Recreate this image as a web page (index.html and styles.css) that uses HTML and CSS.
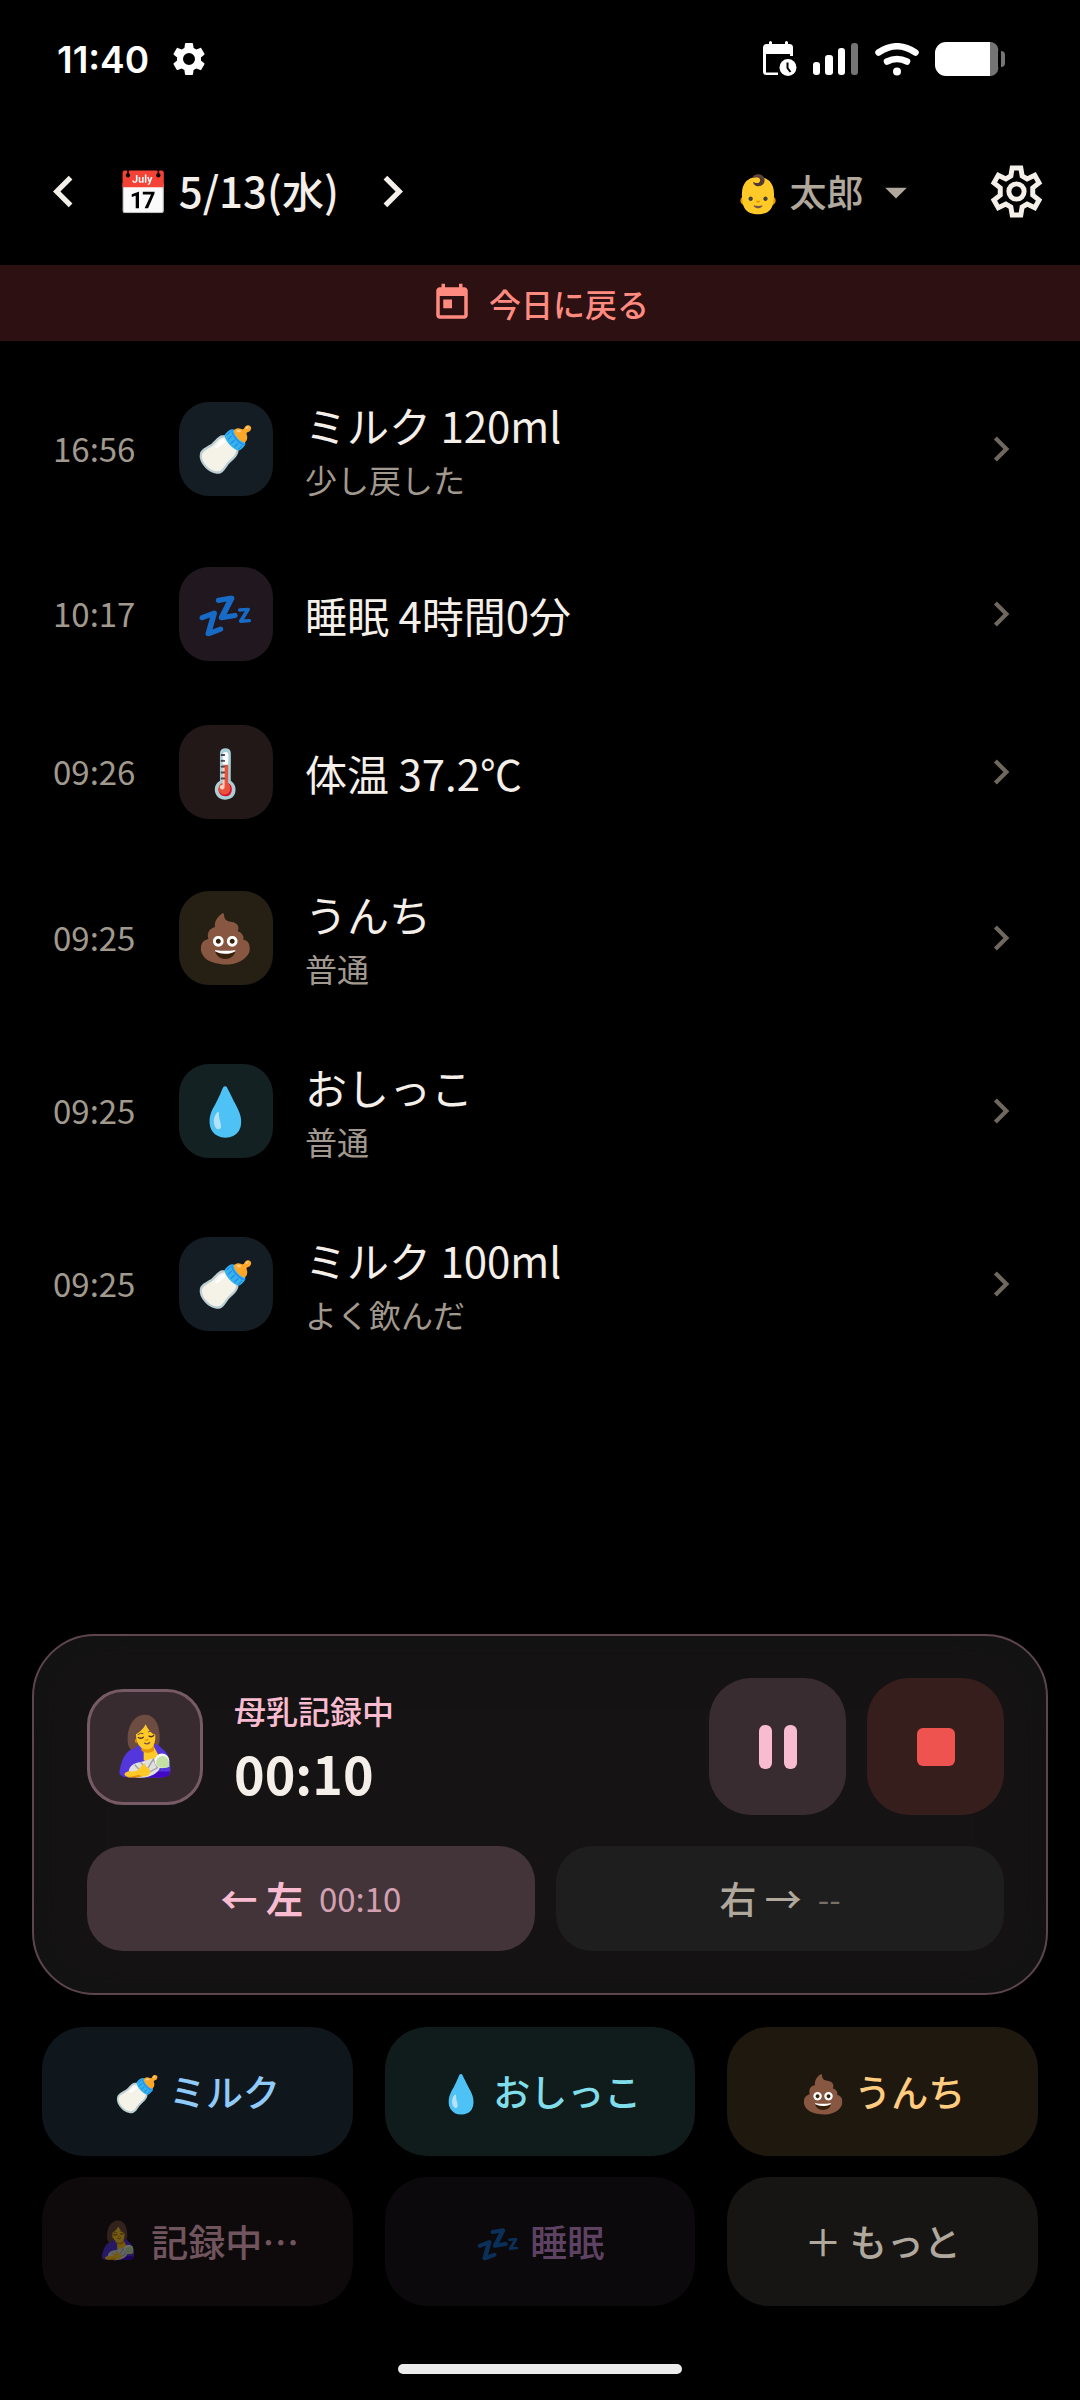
FILE: index.html
```html
<!DOCTYPE html>
<html lang="ja">
<head>
<meta charset="utf-8">
<meta name="viewport" content="width=device-width, initial-scale=1">
<title>育児記録</title>
<link rel="stylesheet" href="styles.css">
</head>
<body>

<svg class="defs" aria-hidden="true">
  <symbol id="nursing" viewBox="36 26 162 194">
    <path d="M117 28c-32 0-50 32-52 66-1 22 3 36 14 42h66c12-8 18-24 16-48-2-36-18-60-44-60z" fill="#6d4c41"/>
    <path d="M88 128c4-8 12-12 24-12h34c10 0 16 6 22 14 16 10 27 30 25 68-2 14-14 18-34 18H70c-24 0-34-8-28-26 6-32 20-58 46-62z" fill="#5436dd"/>
    <path d="M130 198h62c-1 14-12 18-32 18h-30z" fill="#4208c4"/>
    <path d="M113 126h32l14 26-20 22-26-10z" fill="#ffc928"/>
    <path d="M106 118h38v18c-10 8-28 8-38-2z" fill="#e59600"/>
    <path d="M92 100c-6 0-7 10 0 14z" fill="#e59600"/>
    <path d="M119 56c-6 12-16 22-29 30 0 26 12 46 34 46 18 0 25-20 24-44-12-4-22-16-29-32z" fill="#ffc928"/>
    <path d="M97 96q8 5 15-1M129 92q8 4 14-2" fill="none" stroke="#54301f" stroke-width="4" stroke-linecap="round"/>
    <path d="M96 87q7-6 15-3M127 79q7-5 13-1" fill="none" stroke="#6d4c41" stroke-width="3" stroke-linecap="round"/>
    <path d="M118 103q4 3 8-1" fill="none" stroke="#e59600" stroke-width="4" stroke-linecap="round"/>
    <path d="M116 113q8 5 15-2" fill="none" stroke="#795548" stroke-width="4" stroke-linecap="round"/>
    <path d="M68 198c2-18 16-26 34-28l40-12c14 0 20 12 20 24s-12 24-36 32c-24 6-52 4-58-16z" fill="#e0e0e0"/>
    <path d="M104 171l20 20 18-30 12 26-26 14M86 178l14 14" fill="none" stroke="#9e9e9e" stroke-width="4"/>
    <circle cx="168" cy="166" r="22" fill="#fafafa"/>
    <path d="M152 180c-6-18 6-30 22-28 10 2 16 12 16 22v10c-12 6-28 4-38-4z" fill="#c5e1a5"/>
    <path d="M55 206c4-8 14-10 22-8l16-2 18-20c6-4 10 0 6 8 10 0 16 8 15 16-1 10-12 14-24 12l-14 2c-16 3-35 2-39-8z" fill="#ffc928"/>
    <path d="M58 212c14 4 28 0 38-4l14 4-16 4H68z" fill="#e59600"/>
  </symbol>
  <symbol id="chevron-right" viewBox="0 0 24 24"><path d="M10 6 8.590 7.410 13.170 12l-4.580 4.590L10 18l6-6z"/></symbol>
</svg>

<div class="statusbar">
  <span class="clock">11:40</span>
  <svg class="status-gear" viewBox="0 0 24 24"><path d="M19.14 12.94c.04-.3.06-.61.06-.94 0-.32-.02-.64-.07-.94l2.03-1.58c.18-.14.23-.41.12-.61l-1.92-3.32c-.12-.22-.37-.29-.59-.22l-2.39.96c-.5-.38-1.03-.7-1.62-.94l-.36-2.54c-.04-.24-.24-.41-.48-.41h-3.84c-.24 0-.43.17-.47.41l-.36 2.54c-.59.24-1.13.57-1.62.94l-2.39-.96c-.22-.08-.47 0-.59.22L2.74 8.87c-.12.21-.08.47.12.61l2.03 1.58c-.05.3-.09.63-.09.94s.02.64.07.94l-2.03 1.58c-.18.14-.23.41-.12.61l1.92 3.32c.12.22.37.29.59.22l2.39-.96c.5.38 1.03.7 1.62.94l.36 2.54c.05.24.24.41.48.41h3.84c.24 0 .44-.17.47-.41l.36-2.54c.59-.24 1.13-.56 1.62-.94l2.39.96c.22.08.47 0 .59-.22l1.92-3.32c.12-.22.07-.47-.12-.61l-2.01-1.58zM12 15.6A3.6 3.6 0 1 1 12 8.400a3.600 3.600 0 0 1 0 7.200z"/></svg>
  <div class="status-icons">
    <svg width="34" height="36" viewBox="0 0 34 36">
      <path d="M4 3h2V1.500a1.500 1.500 0 0 1 3 0V3h13V1.500a1.500 1.500 0 0 1 3 0V3h1.500A3.500 3.500 0 0 1 30 6.500V15h-3v-2H3v18.500h12V34H3.500A3.500 3.500 0 0 1 0 30.500v-24A3.500 3.500 0 0 1 4 3z"/>
      <circle cx="25" cy="26.500" r="8.500"/>
      <path d="M24.500 21.500v5.500l3 4" fill="none" stroke="#000" stroke-width="2"/>
    </svg>
    <svg width="46" height="32" viewBox="0 0 46 32">
      <rect x="0" y="19" width="7" height="13" rx="3"/>
      <rect x="12" y="12" width="8" height="20" rx="3"/>
      <rect x="25" y="5" width="7" height="27" rx="3"/>
      <rect x="38" y="0" width="7" height="32" rx="3" fill="#757575"/>
    </svg>
    <svg width="44" height="33" viewBox="0 0 44 33" fill="none" stroke="#fff" stroke-width="6.500" stroke-linecap="round">
      <path class="line" d="M3.500 9.500Q22-3 40.500 9.500"/>
      <path class="line" d="M12 18.500q10-5 20 0"/>
      <circle cx="22" cy="28.500" r="4" fill="#fff" stroke="none"/>
    </svg>
    <svg width="70" height="34" viewBox="0 0 70 34">
      <path d="M11 0h44v34H11A11 11 0 0 1 0 23V11A11 11 0 0 1 11 0z"/>
      <path d="M55 0a8 8 0 0 1 8 10v14a8 8 0 0 1-8 10zM66 9q4 0 4 4v8q0 4-4 4z" fill="#757575"/>
    </svg>
  </div>
</div>

<header class="header">
  <button class="icon-btn" aria-label="前の日"><svg viewBox="0 0 24 24"><path d="M15.410 7.410 14 6l-6 6 6 6 1.410-1.410L10.830 12z"/></svg></button>
  <button class="date">📅 5/13(水)</button>
  <button class="icon-btn" aria-label="次の日"><svg><use href="#chevron-right"/></svg></button>
  <label class="child">
    <select aria-label="こども">
      <option>👶 太郎</option>
    </select>
    <svg viewBox="0 0 24 24"><path d="m7 10 5 5 5-5z"/></svg>
  </label>
  <button class="icon-btn" aria-label="設定">
    <svg viewBox="16 14 190 190" stroke="currentColor" stroke-width="15">
      <path class="line" d="M98 38h26l4 24 15 9 23-11 13 23-19 15v22l19 15-13 23-23-11-15 9-4 24H98l-4-24-15-9-23 11-13-23 19-15V98L43 83l13-23 23 11 15-9z"/>
      <circle class="line" cx="111" cy="109" r="23"/>
    </svg>
  </button>
</header>

<button class="today">
  <svg viewBox="0 0 24 24"><path d="M19 3h-1V1h-2v2H8V1H6v2H5c-1.110 0-1.990.9-1.990 2L3 19c0 1.100.89 2 2 2h14c1.100 0 2-.9 2-2V5c0-1.100-.9-2-2-2zm0 16H5V8h14v11zM7 10h5v5H7z"/></svg>
  <span>今日に戻る</span>
</button>

<main class="log">
  <button class="row">
    <span class="time">16:56</span>
    <span class="tile milk">🍼</span>
    <span class="detail"><span class="name">ミルク 120ml</span><span class="note">少し戻した</span></span>
    <svg class="chev"><use href="#chevron-right"/></svg>
  </button>
  <button class="row">
    <span class="time">10:17</span>
    <span class="tile sleep">💤</span>
    <span class="detail"><span class="name">睡眠 4時間0分</span></span>
    <svg class="chev"><use href="#chevron-right"/></svg>
  </button>
  <button class="row">
    <span class="time">09:26</span>
    <span class="tile temp">🌡️</span>
    <span class="detail"><span class="name">体温 37.2℃</span></span>
    <svg class="chev"><use href="#chevron-right"/></svg>
  </button>
  <button class="row">
    <span class="time">09:25</span>
    <span class="tile poop">💩</span>
    <span class="detail"><span class="name">うんち</span><span class="note">普通</span></span>
    <svg class="chev"><use href="#chevron-right"/></svg>
  </button>
  <button class="row">
    <span class="time">09:25</span>
    <span class="tile pee">💧</span>
    <span class="detail"><span class="name">おしっこ</span><span class="note">普通</span></span>
    <svg class="chev"><use href="#chevron-right"/></svg>
  </button>
  <button class="row">
    <span class="time">09:25</span>
    <span class="tile milk">🍼</span>
    <span class="detail"><span class="name">ミルク 100ml</span><span class="note">よく飲んだ</span></span>
    <svg class="chev"><use href="#chevron-right"/></svg>
  </button>
</main>

<section class="timer">
  <div class="timer-top">
    <span class="avatar"><svg width="54" height="65"><use href="#nursing"/></svg></span>
    <div class="timer-text">
      <span class="timer-label">母乳記録中</span>
      <span class="timer-value">00:10</span>
    </div>
    <button class="ctrl pause" aria-label="一時停止">
      <svg width="38" height="44" viewBox="0 0 38 44"><rect x="0" y="0" width="13" height="44" rx="6"/><rect x="25" y="0" width="13" height="44" rx="6"/></svg>
    </button>
    <button class="ctrl stop" aria-label="停止">
      <svg width="38" height="38" viewBox="0 0 38 38"><rect width="38" height="38" rx="6"/></svg>
    </button>
  </div>
  <div class="sides">
    <button class="side active"><b>← 左</b><span>00:10</span></button>
    <button class="side"><b>右 →</b><span>--</span></button>
  </div>
</section>

<nav class="quick">
  <button class="q-milk">🍼 ミルク</button>
  <button class="q-pee">💧 おしっこ</button>
  <button class="q-poop">💩 うんち</button>
  <button class="q-nurse" disabled><svg width="34" height="41"><use href="#nursing"/></svg>記録中…</button>
  <button class="q-sleep" disabled>💤 睡眠</button>
  <button class="q-more">＋ もっと</button>
</nav>

<div class="home-bar"></div>

</body>
</html>
```
FILE: styles.css
```css
* {
  box-sizing: border-box;
}

body {
  margin: 0;
  min-height: 100vh;
  display: flex;
  flex-direction: column;
  background: #000;
  color: #f5efe9;
  font-family: "Noto Sans CJK JP", "Noto Color Emoji", sans-serif;
}

button, select {
  margin: 0;
  padding: 0;
  border: none;
  background: none;
  color: inherit;
  font: inherit;
  cursor: pointer;
}

svg {
  display: block;
  flex: none;
  fill: currentColor;
}

.defs {
  display: none;
}

.line {
  fill: none;
}

/* status bar */
.statusbar {
  display: flex;
  align-items: center;
  height: 118px;
  padding: 0 75px 0 57px;
  color: #fff;
}

.clock {
  font-family: Inter, sans-serif;
  font-size: 37px;
  font-weight: 600;
}

.status-gear {
  width: 40px;
  height: 40px;
  margin-left: 20px;
}

.status-icons {
  display: flex;
  align-items: center;
  gap: 16px;
  margin-left: auto;
}

/* header */
.header {
  display: flex;
  align-items: center;
  height: 147px;
  padding: 0 32px;
}

.icon-btn svg {
  width: 63px;
  height: 63px;
}

.date {
  margin: 0 22px;
  padding-bottom: 4px;
  font-size: 42px;
  font-weight: 500;
}

.child {
  display: flex;
  align-items: center;
  gap: 6px;
  margin: 0 63px 0 auto;
  color: #b0a89c;
  font-size: 37px;
  font-weight: 500;
}

.child select {
  appearance: none;
  padding-bottom: 2px;
}

.child svg {
  width: 52px;
  height: 52px;
}

.today {
  display: flex;
  align-items: center;
  justify-content: center;
  gap: 16px;
  height: 76px;
  background: #2c1012;
  color: #ff8a80;
  font-size: 32px;
  font-weight: 500;
}

.today svg {
  width: 42px;
  height: 42px;
}

/* log */
.log {
  flex: 1;
  display: flex;
  flex-direction: column;
  padding: 21px 0;
}

.row {
  display: grid;
  grid-template-columns: 94px 94px 1fr 50px;
  align-items: center;
  gap: 32px;
  min-height: 158px;
  padding: 32px 54px 32px 53px;
  text-align: left;
}

.time {
  padding-bottom: 2px;
  color: #a1998e;
  font-size: 33px;
}

.tile {
  display: flex;
  align-items: center;
  justify-content: center;
  height: 94px;
  padding-bottom: 6px;
  border-radius: 30px;
  font-size: 47px;
}

.milk { background: #151d24; }
.sleep { background: #20171f; }
.temp { background: #231818; }
.poop { background: #261f14; }
.pee { background: #142122; }

.detail {
  display: flex;
  flex-direction: column;
}

.name {
  font-size: 42px;
  line-height: 61px;
}

.note {
  color: #a1998e;
  font-size: 32px;
  line-height: 48px;
}

.chev {
  width: 50px;
  height: 50px;
  color: #70685f;
}

/* running timer */
.timer {
  margin: 0 32px;
  padding: 42px 42px 42px 53px;
  border: 2px solid #5d454e;
  border-radius: 63px;
  background: #161314;
  box-shadow: inset 0 0 60px #111312;
}

.timer-top {
  display: flex;
  align-items: center;
  gap: 21px;
}

.avatar {
  display: flex;
  align-items: center;
  justify-content: center;
  width: 116px;
  height: 116px;
  border: 3px solid #765a65;
  border-radius: 36px;
  background: #382b2f;
}

.timer-text {
  flex: 1;
  display: flex;
  flex-direction: column;
  padding: 4px 0 0 10px;
}

.timer-label {
  color: #f8bbd0;
  font-size: 32px;
  font-weight: 500;
  line-height: 48px;
}

.timer-value {
  font-size: 52px;
  font-weight: 700;
  line-height: 78px;
}

.ctrl {
  display: flex;
  align-items: center;
  justify-content: center;
  width: 137px;
  height: 137px;
  border-radius: 42px;
}

.pause {
  background: #382c30;
  color: #f8bbd0;
}

.stop {
  background: #361e1d;
  color: #ef5350;
}

.sides {
  display: grid;
  grid-template-columns: 1fr 1fr;
  gap: 21px;
  margin-top: 31px;
}

.side {
  display: flex;
  align-items: center;
  justify-content: center;
  gap: 16px;
  height: 105px;
  padding-bottom: 2px;
  border-radius: 36px;
  background: #1e1e1e;
  color: #b0a89c;
}

.side b {
  font-size: 37px;
  font-weight: 500;
}

.side span {
  color: #777066;
  font-size: 33px;
}

.side.active {
  background: #423439;
  color: #f8bbd0;
}

.side.active b {
  font-weight: 700;
}

.side.active span {
  color: #d3a0b2;
}

/* quick add */
.quick {
  display: grid;
  grid-template-columns: repeat(3, 1fr);
  gap: 21px 32px;
  padding: 32px 42px 0;
}

.quick button {
  display: flex;
  align-items: center;
  justify-content: center;
  height: 129px;
  padding-bottom: 2px;
  border-radius: 42px;
  font-size: 37px;
  font-weight: 500;
}

.quick svg {
  margin: 0 16px 0 6px;
}

.quick button:disabled {
  opacity: 0.45;
}

.q-milk { background: #10171c; color: #90caf9; }
.q-pee { background: #101b1c; color: #80deea; }
.q-poop { background: #1f180f; color: #ffcc80; }
.q-nurse { background: #1f1719; color: #f8bbd0; }
.q-sleep { background: #19141b; color: #ce93d8; }
.q-more { background: #161514; color: #b0a89c; }

.home-bar {
  width: 284px;
  height: 10px;
  margin: 58px auto 26px;
  border-radius: 5px;
  background: #ebebeb;
}
```
